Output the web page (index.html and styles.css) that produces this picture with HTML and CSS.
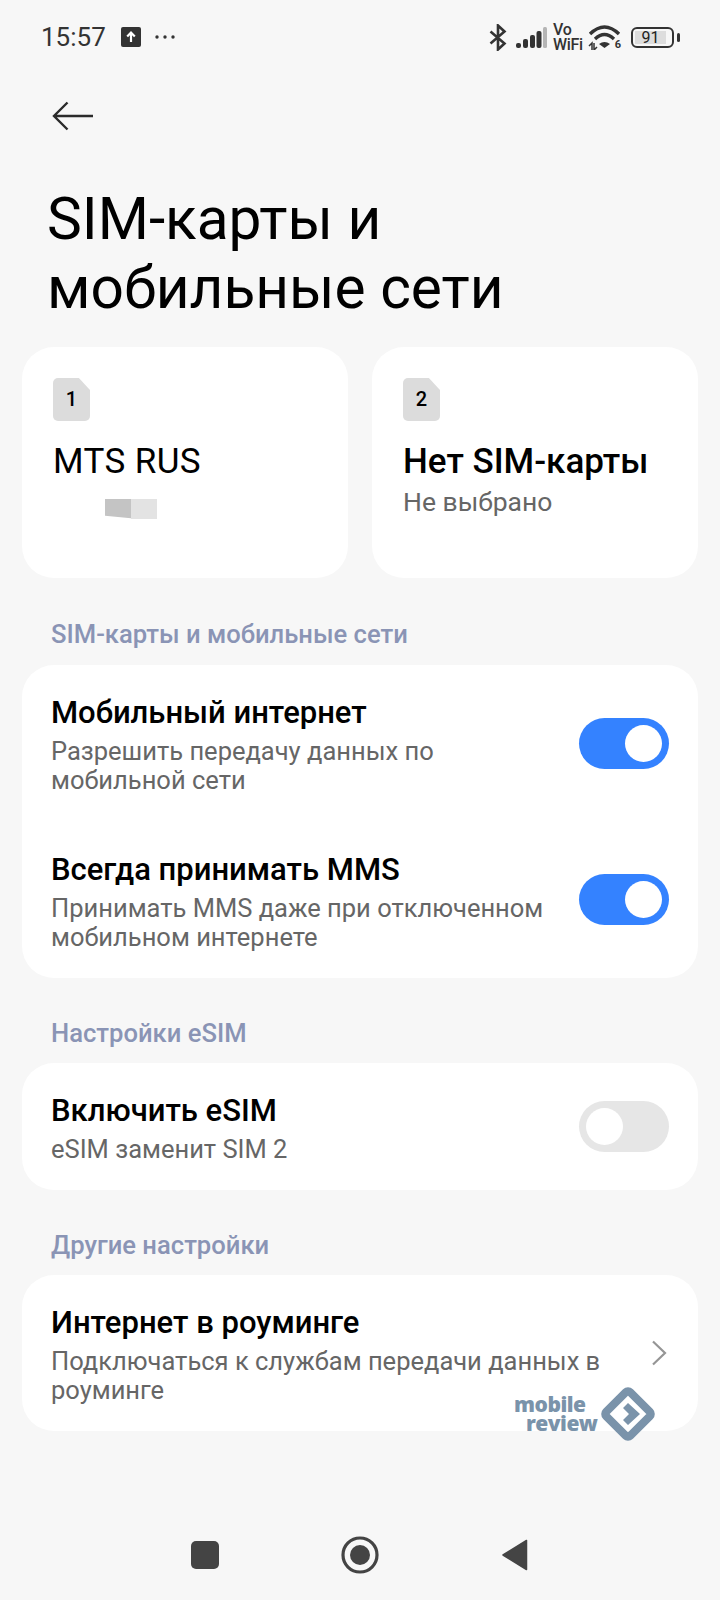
FILE: index.html
```html
<!DOCTYPE html>
<html lang="ru">
<head>
    <meta charset="UTF-8">
    <meta name="viewport" content="width=device-width, initial-scale=1.0">
    <title>SIM-карты и мобильные сети</title>
    <link rel="stylesheet" href="styles.css">
</head>
<body>
    <div class="screen">
        <!-- Status bar -->
        <div class="status-bar">
            <div class="status-left">
                <span class="clock">15:57</span>
                <svg class="upload-icon" width="20" height="20" viewBox="0 0 20 20">
                    <rect width="20" height="20" rx="2" fill="#333"/>
                    <path d="M10 15V6M6.2 9.6 10 5.6l3.8 4" fill="none" stroke="#fff" stroke-width="2.2"/>
                </svg>
                <svg class="dots-icon" width="22" height="6" viewBox="0 0 22 6">
                    <circle cx="3" cy="3" r="1.7" fill="#333"/>
                    <circle cx="11" cy="3" r="1.7" fill="#333"/>
                    <circle cx="19" cy="3" r="1.7" fill="#333"/>
                </svg>
            </div>
            <div class="status-right">
                <svg class="bt-icon" width="18" height="27" viewBox="0 0 18 27">
                    <path d="M1.5 7.5 15.5 19.5 9 25.5V1.5L15.5 7.5 1.5 19.5" fill="none" stroke="#333" stroke-width="2.6"/>
                </svg>
                <svg class="signal-icon" width="31" height="21" viewBox="0 0 31 21">
                    <rect x="0" y="16" width="5" height="5" rx="2" fill="#333"/>
                    <rect x="7" y="12" width="5" height="9" rx="2" fill="#333"/>
                    <rect x="14" y="8" width="5" height="13" rx="2" fill="#333"/>
                    <rect x="20.5" y="4" width="5" height="17" rx="2" fill="#333"/>
                    <rect x="27" y="0" width="4" height="21" rx="1.5" fill="#b5b5b5"/>
                </svg>
                <div class="vowifi"><span>Vo</span><span>WiFi</span></div>
                <div class="wifi">
                    <svg width="33" height="26" viewBox="0 0 33 26">
                        <path d="M2 10Q16.5 -4 31 10M7 15Q16.5 6 26 15" fill="none" stroke="#333" stroke-width="3.4"/>
                        <path d="M11 20Q16.5 16 22 20L16.5 24Z" fill="#333"/>
                        <path d="M1 22 4 19V26M6 19V26L9 23" fill="none" stroke="#333" stroke-width="1.5"/>
                    </svg>
                    <span class="wifi-six">6</span>
                </div>
                <div class="battery">
                    <div class="battery-body">
                        <div class="battery-level">91</div>
                    </div>
                    <div class="battery-tip"></div>
                </div>
            </div>
        </div>

        <!-- Back button -->
        <div class="top-nav">
            <svg width="42" height="30" viewBox="0 0 42 30">
                <path d="M41 15H2M15.5 1.5 2 15l13.5 13.5" fill="none" stroke="#2b2b2b" stroke-width="2.4"/>
            </svg>
        </div>

        <h1>SIM-карты и<br>мобильные сети</h1>

        <!-- SIM cards -->
        <div class="sim-cards">
            <div class="sim-card">
                <div class="sim-badge">1</div>
                <div class="sim-name sim-name-light">MTS RUS</div>
                <div class="sim-blur"><span class="blur-dark"></span><span class="blur-light"></span></div>
            </div>
            <div class="sim-card">
                <div class="sim-badge">2</div>
                <div class="sim-name">Нет SIM-карты</div>
                <div class="sim-sub">Не выбрано</div>
            </div>
        </div>

        <div class="section-label label-first">SIM-карты и мобильные сети</div>
        <div class="group">
            <div class="row">
                <div class="row-text">
                    <div class="row-title">Мобильный интернет</div>
                    <div class="row-sub">Разрешить передачу данных по<br>мобильной сети</div>
                </div>
                <div class="switch on"><div class="knob"></div></div>
            </div>
            <div class="row">
                <div class="row-text">
                    <div class="row-title">Всегда принимать MMS</div>
                    <div class="row-sub">Принимать MMS даже при отключенном<br>мобильном интернете</div>
                </div>
                <div class="switch on"><div class="knob"></div></div>
            </div>
        </div>

        <div class="section-label">Настройки eSIM</div>
        <div class="group">
            <div class="row row-single">
                <div class="row-text">
                    <div class="row-title">Включить eSIM</div>
                    <div class="row-sub">eSIM заменит SIM 2</div>
                </div>
                <div class="switch"><div class="knob"></div></div>
            </div>
        </div>

        <div class="section-label">Другие настройки</div>
        <div class="group">
            <div class="row">
                <div class="row-text">
                    <div class="row-title">Интернет в роуминге</div>
                    <div class="row-sub">Подключаться к службам передачи данных в<br>роуминге</div>
                </div>
                <svg class="chevron" width="16" height="26" viewBox="0 0 16 26">
                    <path d="M2 1.5 14 13 2 24.5" fill="none" stroke="#959595" stroke-width="2.2"/>
                </svg>
            </div>
        </div>

        <!-- Watermark sits over the last card -->
        <div class="watermark">
            <div class="watermark-text"><span class="wm-mobile">mobile</span><span>review</span></div>
            <svg width="54" height="54" viewBox="0 0 54 54">
                <rect x="10" y="10" width="34" height="34" rx="3" fill="none" stroke="#7a93aa" stroke-width="8" transform="rotate(45 27 27)"/>
                <path d="M27 16 39 27 27 38 22 33 28 27 22 21Z" fill="#7a93aa"/>
            </svg>
        </div>

        <!-- Navigation bar -->
        <div class="nav-bar">
            <div class="nav-square"></div>
            <svg width="38" height="38" viewBox="0 0 38 38">
                <circle cx="19" cy="19" r="17" fill="none" stroke="#444" stroke-width="3.2"/>
                <circle cx="19" cy="19" r="10" fill="#444"/>
            </svg>
            <svg class="nav-back" width="26" height="32" viewBox="0 0 26 32">
                <path d="M24.5 1.5V30.5L1 16Z" fill="#444" stroke="#444" stroke-width="1.5" stroke-linejoin="round"/>
            </svg>
        </div>
    </div>
</body>
</html>
```

FILE: styles.css
```css
* {
    box-sizing: border-box;
}

body {
    margin: 0;
    background-color: #f7f7f7;
    font-family: Roboto, 'Noto Sans', sans-serif;
    color: #000;
}

.screen {
    position: relative;
    display: flex;
    flex-direction: column;
    width: 720px;
    height: 1600px;
    overflow: hidden;
}

/* Status bar */
.status-bar {
    display: flex;
    justify-content: space-between;
    align-items: center;
    height: 74px;
    padding: 0 40px 0 41px;
}

.status-left,
.status-right {
    display: flex;
    align-items: center;
}

.clock {
    font-size: 26px;
    color: #333;
    margin-right: 15px;
}

.dots-icon {
    margin-left: 13px;
}

.status-right {
    gap: 6px;
}

.signal-icon {
    margin-left: 3px;
}

.vowifi {
    display: flex;
    flex-direction: column;
    width: 29px;
    font-size: 16px;
    font-weight: 500;
    line-height: 15px;
    letter-spacing: -0.3px;
    color: #333;
}

.wifi {
    position: relative;
    display: flex;
    width: 33px;
    height: 26px;
}

/* the little 6 sits over the corner of the wifi icon */
.wifi-six {
    position: absolute;
    right: 0;
    bottom: 0;
    font-size: 11px;
    font-weight: 700;
    line-height: 11px;
    color: #333;
}

.battery {
    display: flex;
    align-items: center;
    margin-left: 4px;
}

.battery-body {
    width: 43px;
    height: 21px;
    border: 2px solid #333;
    border-radius: 6px;
    padding: 2px;
}

.battery-level {
    width: 88%;
    height: 100%;
    background-color: #ddd;
    font-size: 16px;
    line-height: 13px;
    text-align: center;
    color: #222;
}

.battery-tip {
    width: 3px;
    height: 9px;
    margin-left: 3px;
    border-radius: 2px;
    background-color: #333;
}

/* Header */
.top-nav {
    display: flex;
    padding: 27px 0 0 52px;
    height: 111px;
}

h1 {
    margin: 0;
    padding-left: 47px;
    font-size: 58.6px;
    font-weight: 400;
    line-height: 69px;
}

/* SIM cards */
.sim-cards {
    display: flex;
    gap: 24px;
    margin: 0 22px;
    padding-top: 24px;
}

.sim-card {
    flex: 1;
    height: 231px;
    padding: 31px 31px 0;
    background-color: #fff;
    border-radius: 32px;
}

.sim-badge {
    width: 37px;
    height: 43px;
    background-color: #dcdcdc;
    border-radius: 5px;
    clip-path: polygon(0 0, 70% 0, 100% 28%, 100% 100%, 0 100%);
    font-size: 20px;
    font-weight: 500;
    line-height: 43px;
    text-align: center;
}

.sim-name {
    margin-top: 21px;
    font-size: 35px;
    font-weight: 500;
    line-height: 40px;
}

.sim-name-light {
    font-weight: 450;
    letter-spacing: 0.4px;
}

.sim-sub {
    margin-top: 2px;
    font-size: 26.5px;
    line-height: 36px;
    color: #666;
}

.sim-blur {
    display: flex;
    margin: 17px 0 0 52px;
}

.blur-dark,
.blur-light {
    display: block;
    width: 26px;
    height: 20px;
}

.blur-dark {
    background-color: #c4c4c4;
    clip-path: polygon(0 0, 100% 0, 100% 96%, 0 84%);
}

.blur-light {
    background-color: #e3e3e3;
}

/* Sections */
.section-label {
    height: 85px;
    padding: 40px 0 0 51px;
    font-size: 25.6px;
    font-weight: 500;
    line-height: 30px;
    color: #8a94b5;
}

.label-first {
    height: 87px;
    padding-top: 41px;
}

.group {
    margin: 0 22px;
    background-color: #fff;
    border-radius: 32px;
}

.row {
    display: flex;
    align-items: center;
    justify-content: space-between;
    height: 156.5px;
    padding: 0 29px;
}

.row-single {
    height: 126.5px;
}

.row-text {
    padding-top: 4px;
}

.row-title {
    font-size: 31px;
    font-weight: 500;
    line-height: 36px;
}

.row-sub {
    margin-top: 6px;
    font-size: 25.5px;
    line-height: 29px;
    color: #666;
}

/* Toggles */
.switch {
    display: flex;
    align-items: center;
    width: 90px;
    height: 51px;
    padding: 7px;
    background-color: #e6e6e6;
    border-radius: 26px;
}

.switch.on {
    justify-content: flex-end;
    background-color: #3482ff;
}

.knob {
    width: 37px;
    height: 37px;
    background-color: #fff;
    border-radius: 50%;
}

.chevron {
    margin-right: 2px;
}

/* Watermark */
.watermark {
    position: absolute;
    left: 514px;
    top: 1387px;
    display: flex;
    align-items: center;
    gap: 4px;
}

.watermark-text {
    display: flex;
    flex-direction: column;
    align-items: flex-end;
    font-family: 'Open Sans', sans-serif;
    font-size: 21px;
    font-weight: 800;
    line-height: 19px;
    letter-spacing: -0.5px;
    color: #7a93aa;
}

.wm-mobile {
    margin-right: 12px;
}

/* Navigation bar */
.nav-bar {
    display: flex;
    align-items: center;
    gap: 122px;
    margin-top: auto;
    margin-bottom: 26px;
    padding-left: 191px;
}

.nav-back {
    margin-left: 1px;
}

.nav-square {
    width: 28px;
    height: 28px;
    background-color: #444;
    border-radius: 5px;
}
```
